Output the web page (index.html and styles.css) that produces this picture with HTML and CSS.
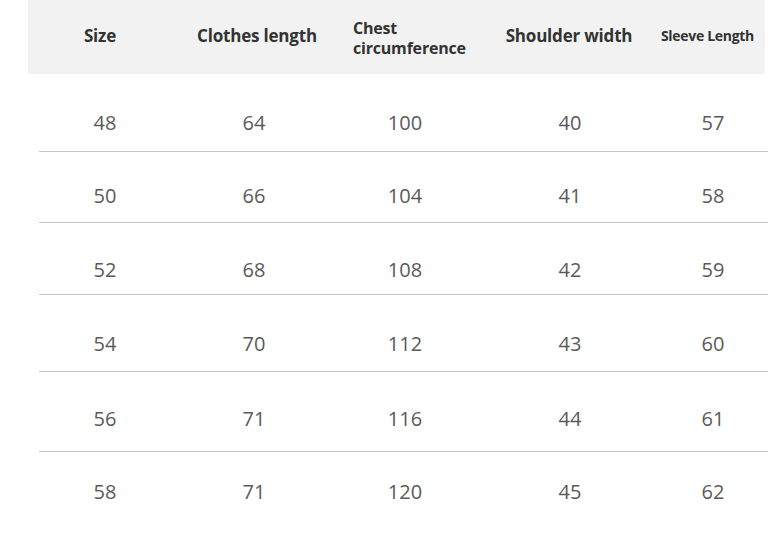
FILE: index.html
```html
<!DOCTYPE html>
<html>
<head>
<meta charset="utf-8">
<link rel="stylesheet" href="styles.css">
</head>
<body>
<div class="chart">
  <div class="head">
    <div class="h">Size</div>
    <div class="h">Clothes length</div>
    <div class="h chest">Chest<br>circumference</div>
    <div class="h">Shoulder width</div>
    <div class="h small">Sleeve Length</div>
  </div>
  <div class="rows">
    <div class="row"><span>48</span><span>64</span><span>100</span><span>40</span><span>57</span></div>
    <div class="row"><span>50</span><span>66</span><span>104</span><span>41</span><span>58</span></div>
    <div class="row"><span>52</span><span>68</span><span>108</span><span>42</span><span>59</span></div>
    <div class="row"><span>54</span><span>70</span><span>112</span><span>43</span><span>60</span></div>
    <div class="row"><span>56</span><span>71</span><span>116</span><span>44</span><span>61</span></div>
    <div class="row"><span>58</span><span>71</span><span>120</span><span>45</span><span>62</span></div>
  </div>
</div>
</body>
</html>
```
FILE: styles.css
```css
html, body {
  margin: 0;
  padding: 0;
  background: #ffffff;
}
body {
  font-family: "Open Sans", "Liberation Sans", sans-serif;
  width: 782px;
  height: 534px;
  overflow: hidden;
}
.chart {
  display: flex;
  flex-direction: column;
}
.head {
  margin-left: 28px;
  width: 737px;
  height: 74px;
  background: #f2f2f2;
  display: grid;
  grid-template-columns: 134px 180px 136px 172px 105px;
  padding-left: 5px;
  box-sizing: border-box;
  align-items: center;
}
.h {
  text-align: center;
  font-weight: 700;
  font-size: 17px;
  color: #333;
  letter-spacing: -0.2px;
  padding-bottom: 4px;
}
.h.chest {
  font-size: 16px;
  text-align: left;
  line-height: 20px;
  padding-left: 6px;
  padding-bottom: 0;
  padding-top: 2px;
}
.h.small {
  font-size: 14px;
  letter-spacing: -0.3px;
}
.rows {
  margin-left: 39px;
  width: 729px;
  display: flex;
  flex-direction: column;
}
.row {
  display: grid;
  grid-template-columns: 132px 166px 136px 194px 92px;
  align-items: center;
  border-bottom: 1.5px solid #c4c4c4;
  font-size: 20px;
  color: #5a5a5a;
  box-sizing: border-box;
}
.row span {
  text-align: center;
}
.row:nth-child(1) { height: 78px; padding-top: 20px; }
.row:nth-child(2) { height: 71px; padding-top: 17px; }
.row:nth-child(3) { height: 72px; padding-top: 22px; }
.row:nth-child(4) { height: 77px; padding-top: 21px; }
.row:nth-child(5) { height: 80px; padding-top: 13px; }
.row:nth-child(6) { height: 80px; border-bottom: none; align-items: start; }
.row:nth-child(6) span { margin-top: 26px; }
```
